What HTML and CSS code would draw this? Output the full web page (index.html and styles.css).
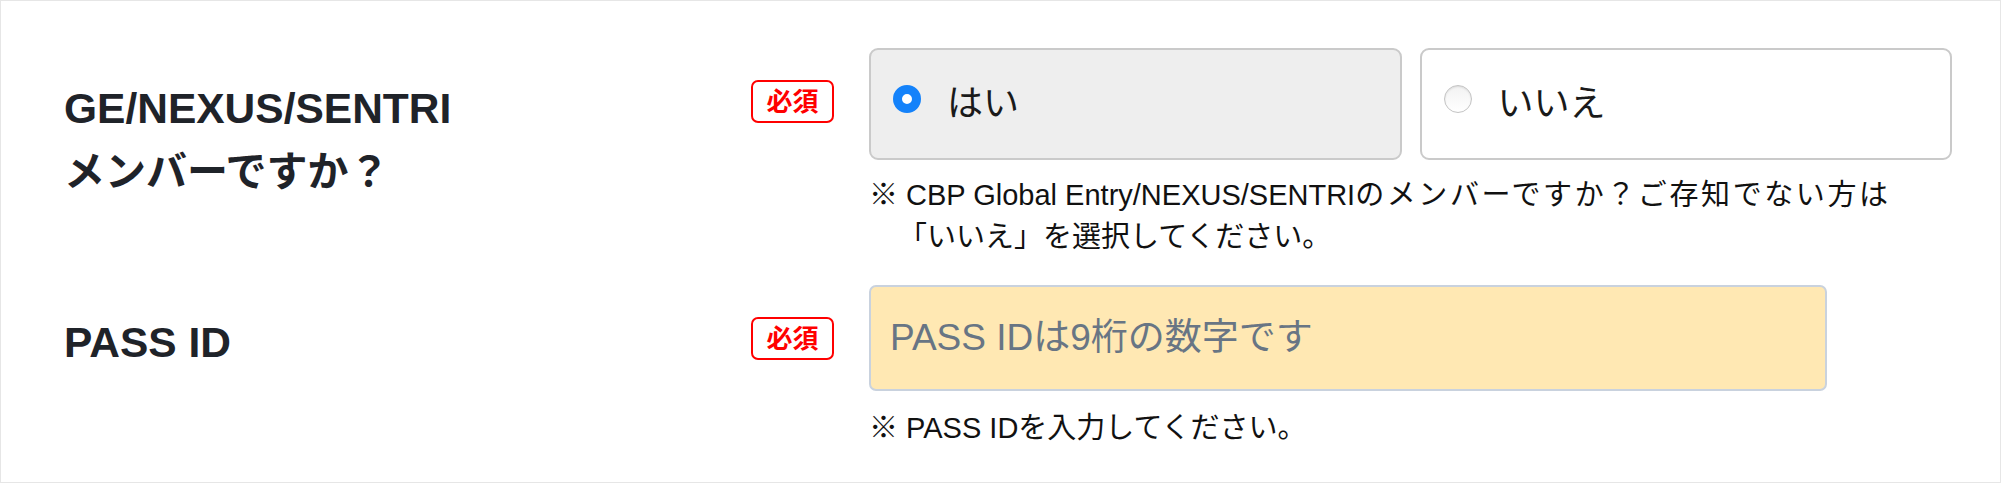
FILE: index.html
```html
<!DOCTYPE html>
<html lang="ja">
<head>
<meta charset="utf-8">
<title>PASS ID</title>
<link rel="stylesheet" href="styles.css">
</head>
<body>
<div class="form">
  <div class="row">
    <div class="label label--first"><span class="label-latin">GE/NEXUS/SENTRI</span><br>メンバーですか？</div>
    <span class="badge">必須</span>
    <div class="field">
      <div class="choices">
        <label class="choice is-checked"><span class="radio radio--on"></span><span class="choice-text">はい</span></label>
        <label class="choice"><span class="radio"></span><span class="choice-text">いいえ</span></label>
      </div>
      <p class="note">※ CBP Global Entry/NEXUS/SENTRI<span class="note-spread">のメンバーですか？ご存知でない方は</span><br>「いいえ」を選択してください。</p>
    </div>
  </div>
  <div class="row row--second">
    <div class="label label--second"><span class="label-latin">PASS ID</span></div>
    <span class="badge">必須</span>
    <div class="field">
      <input class="text-input" type="text" placeholder="PASS IDは9桁の数字です">
      <p class="note note--input">※ PASS IDを入力してください。</p>
    </div>
  </div>
</div>
</body>
</html>
```
FILE: styles.css
```css
html, body {
  margin: 0;
  padding: 0;
  background: #fff;
}
body {
  font-family: "Liberation Sans", "Noto Sans CJK JP", sans-serif;
  color: #212529;
}
.form {
  width: 2001px;
  height: 483px;
  box-sizing: border-box;
  border: 1px solid #e6e6e6;
  padding: 47px 0 0 63px;
}
.row {
  display: flex;
  align-items: flex-start;
}
.row--second {
  margin-top: 27px;
}
.label {
  width: 687px;
  font-size: 41px;
  line-height: 63px;
  font-weight: bold;
  color: #1f2329;
}
.label-latin {
  font-size: 42.5px;
  line-height: 63px;
}
.label--first {
  padding-top: 29px;
}
.label--second {
  padding-top: 26px;
}
.badge {
  flex: none;
  margin-top: 32px;
  margin-right: 35px;
  width: 83px;
  height: 43px;
  box-sizing: border-box;
  border: 2px solid #ff0000;
  border-radius: 7px;
  display: flex;
  align-items: center;
  justify-content: center;
  color: #ff0000;
  font-size: 26px;
  font-weight: bold;
  line-height: 1;
  padding-top: 1px;
}
.field {
  width: 1083px;
}
.choices {
  display: grid;
  grid-template-columns: 1fr 1fr;
  gap: 18px;
}
.choice {
  height: 112px;
  box-sizing: border-box;
  border: 2px solid #cacaca;
  border-radius: 9px;
  background: #fff;
  display: flex;
  align-items: center;
  padding-left: 22px;
  font-size: 36px;
  color: #1a1a1a;
}
.choice.is-checked {
  background: #eeeeee;
}
.choice-text {
  margin-left: 26px;
  line-height: 1;
}
.radio {
  flex: none;
  width: 28px;
  height: 28px;
  box-sizing: border-box;
  border-radius: 50%;
  border: 1px solid #c4c4c4;
  background: linear-gradient(#f2f2f2, #ffffff);
  box-shadow: inset 0 1px 2px rgba(0, 0, 0, 0.1);
  margin-bottom: 10px;
}
.radio--on {
  border: 9px solid #1482fa;
  background: #fff;
  box-shadow: none;
}
.note {
  margin: 14px 0 0;
  font-size: 29px;
  line-height: 42px;
  color: #111;
  padding-left: 1em;
  text-indent: -1em;
}
.note-spread {
  letter-spacing: 2.6px;
}
.note--input {
  margin-top: 16px;
}
.text-input {
  display: block;
  width: 958px;
  height: 106px;
  box-sizing: border-box;
  border: 2px solid #c9d2de;
  border-radius: 7px;
  background: #ffe8b3;
  padding: 0 19px;
  font-family: "Liberation Sans", "Noto Sans CJK JP", sans-serif;
  font-size: 37px;
  color: #212529;
  outline: none;
  margin: 0;
}
.text-input::placeholder {
  color: #687584;
  opacity: 1;
}
```
